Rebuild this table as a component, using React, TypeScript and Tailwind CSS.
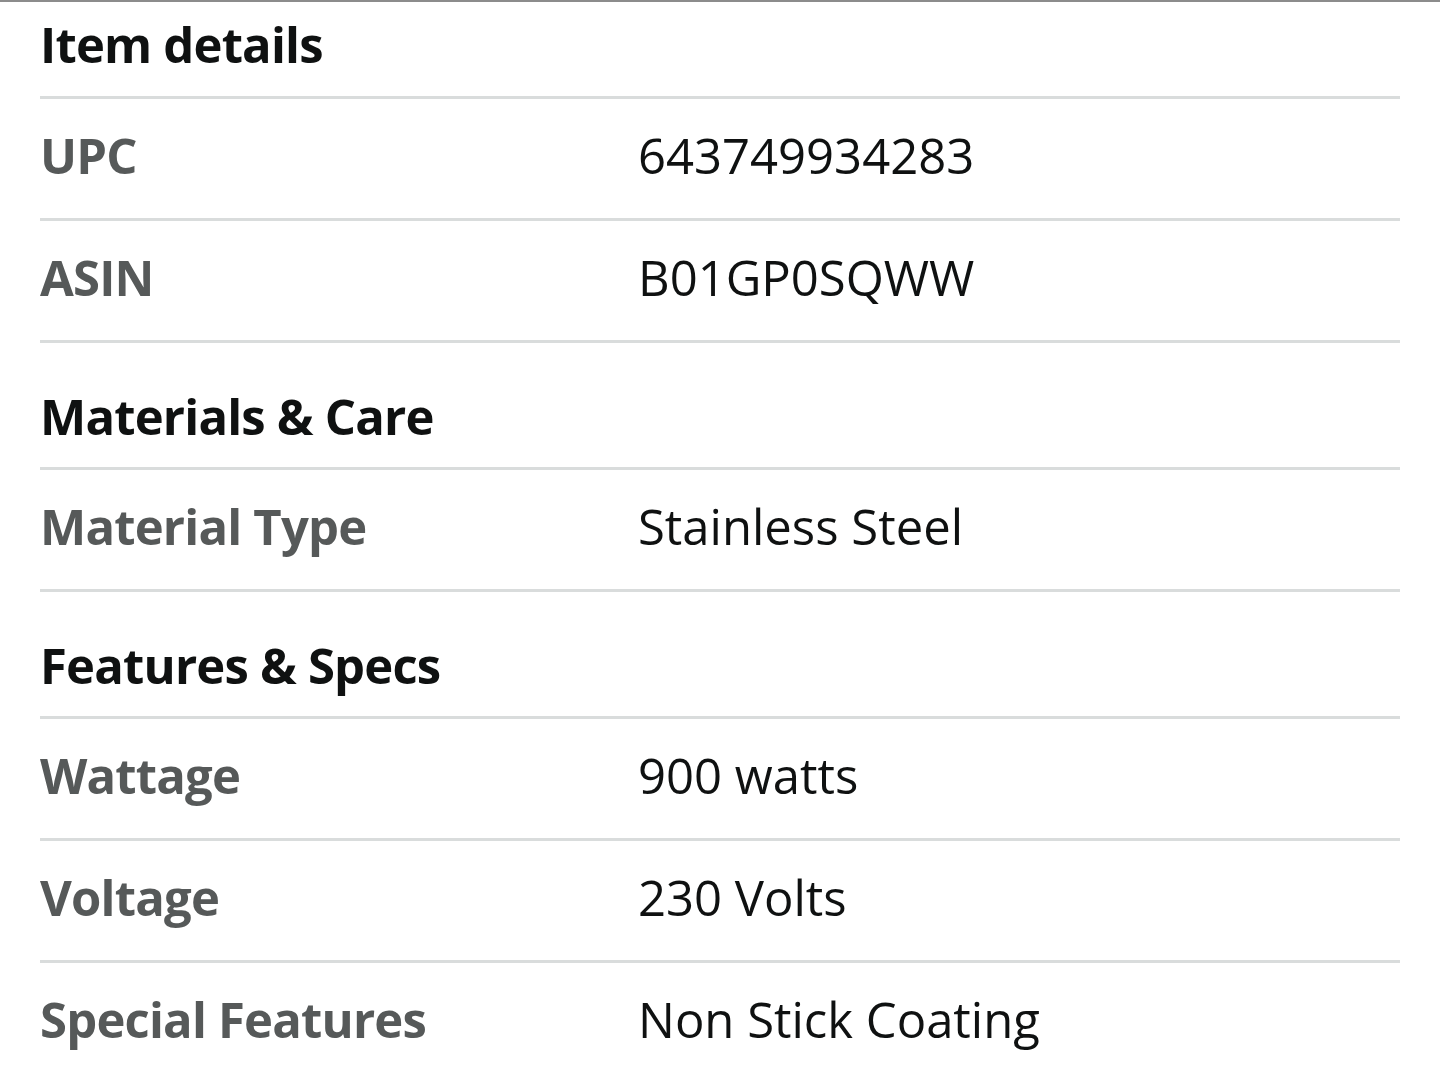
import React from "react";

type Row =
  | { kind: "header"; text: string }
  | { kind: "item"; label: string; value: string };

const rows: Row[] = [
  { kind: "item", label: "UPC", value: "643749934283" },
  { kind: "item", label: "ASIN", value: "B01GP0SQWW" },
  { kind: "header", text: "Materials & Care" },
  { kind: "item", label: "Material Type", value: "Stainless Steel" },
  { kind: "header", text: "Features & Specs" },
  { kind: "item", label: "Wattage", value: "900 watts" },
  { kind: "item", label: "Voltage", value: "230 Volts" },
  { kind: "item", label: "Special Features", value: "Non Stick Coating" },
];

export default function App() {
  return (
    <div
      className="min-h-[1078px] w-[1440px] bg-white border-t-2 border-[#8c8c8c] px-[40px] overflow-hidden"
      style={{ fontFamily: '"Open Sans", "Noto Sans", sans-serif' }}
    >
      <div className="pt-[12px] pb-[22px] text-[49px] leading-[60px] font-bold tracking-[-0.8px] text-[#0f1111]">
        Item details
      </div>
      {rows.map((r, i) =>
        r.kind === "header" ? (
          <div
            key={i}
            className="border-t-[3px] border-[#d9dcdc] pt-[43px] pb-[21px] text-[49px] leading-[60px] font-bold tracking-[-0.8px] text-[#0f1111]"
          >
            {r.text}
          </div>
        ) : (
          <div
            key={i}
            className="flex border-t-[3px] border-[#d9dcdc] pt-[26px] pb-[33px] text-[49px] leading-[60px]"
          >
            <div className="w-[598px] shrink-0 font-bold tracking-[-0.8px] text-[#565959]">{r.label}</div>
            <div className="text-[#0f1111]">{r.value}</div>
          </div>
        )
      )}
    </div>
  );
}
